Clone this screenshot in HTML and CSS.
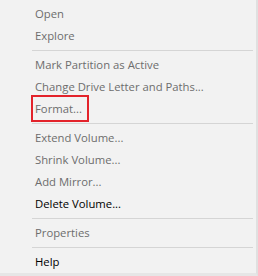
FILE: index.html
```html
<!DOCTYPE html>
<html lang="en">
<head>
    <meta charset="UTF-8">
    <title>Volume menu</title>

    <link rel="stylesheet" href="styles.css">
</head>
<body>
    <div class="menu">
        <div class="item">Open</div>
        <div class="item">Explore</div>
        <div class="sep"></div>
        <div class="item">Mark Partition as Active</div>
        <div class="item">Change Drive Letter and Paths...</div>
        <div class="item"><span class="marked">Format...</span></div>
        <div class="sep"></div>
        <div class="item">Extend Volume...</div>
        <div class="item">Shrink Volume...</div>
        <div class="item">Add Mirror...</div>
        <div class="item on">Delete Volume...</div>
        <div class="sep"></div>
        <div class="item">Properties</div>
        <div class="sep"></div>
        <div class="item on">Help</div>
    </div>
</body>
</html>
```

FILE: styles.css
```css
body {
    margin: 0;
    background: #f2f2f2;
}
.menu {
    width: 258px;
    height: 276px;
    box-sizing: border-box;
    padding-top: 3px;
    background: #f2f2f2;
    border-right: 2px solid #e0e0e0;
    border-bottom: 3px solid #e6e6e6;
    font-family: "Open Sans", "Noto Sans", sans-serif;
    font-size: 11.3px;
}
.item {
    height: 22px;
    line-height: 22px;
    padding-left: 35px;
    color: #6d6d6d;
    white-space: nowrap;
}
.item.on {
    color: #000;
}
.sep {
    height: 7px;
    display: flex;
    align-items: center;
    padding-left: 32px;
    padding-right: 3px;
}
.sep::before {
    content: "";
    flex: 1;
    height: 1px;
    background: #d5d5d5;
}
.marked {
    position: relative;
}
.marked::after {
    content: "";
    position: absolute;
    left: -4px;
    right: -7px;
    top: -6px;
    bottom: -6px;
    border: 2px solid #e3232b;
}
```
